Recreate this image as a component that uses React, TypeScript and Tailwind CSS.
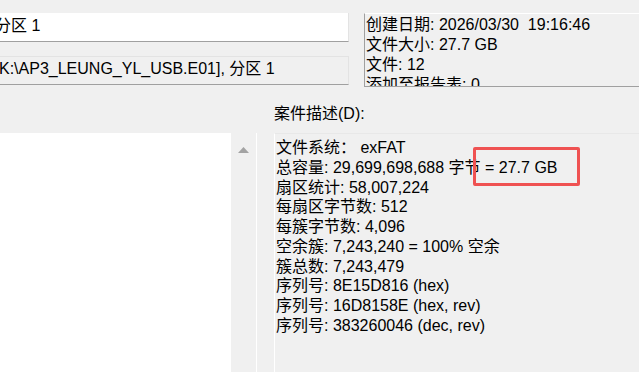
const font = "font-['Liberation_Sans','Noto_Sans_CJK_SC',sans-serif]"

const infoLines = [
  '创建日期: 2026/03/30  19:16:46',
  '文件大小: 27.7 GB',
  '文件: 12',
  '添加至报告表: 0',
]

const descLines = [
  '文件系统： exFAT',
  '总容量: 29,699,698,688 字节 = 27.7 GB',
  '扇区统计: 58,007,224',
  '每扇区字节数: 512',
  '每簇字节数: 4,096',
  '空余簇: 7,243,240 = 100% 空余',
  '簇总数: 7,243,479',
  '序列号: 8E15D816 (hex)',
  '序列号: 16D8158E (hex, rev)',
  '序列号: 383260046 (dec, rev)',
]

export default function App() {
  return (
    <div
      className={`${font} w-[639px] h-[372px] overflow-hidden bg-[#f0f0f0] text-[16px] text-black`}
    >
      {/* Top: partition fields + summary */}
      <div className="flex items-start pt-[13px] h-[87px]">
        <div className="w-[349px] shrink-0 flex flex-col gap-[14px]">
          <div className="h-[29px] bg-white border-b border-r border-b-[#a0a0a0] border-r-[#e3e3e3] pt-[3px] leading-[20px] whitespace-nowrap overflow-hidden">
            <span className="inline-block -ml-[5px]">分区 1</span>
          </div>
          <div className="h-[29px] bg-[#f0f0f0] border-t border-r border-b border-t-[#e3e3e3] border-r-[#e3e3e3] border-b-[#a0a0a0] pt-[2px] leading-[20px] whitespace-nowrap overflow-hidden">
            <span className="inline-block -ml-[1px]">K:\AP3_LEUNG_YL_USB.E01], 分区 1</span>
          </div>
        </div>
        <div className="ml-[15px] w-[300px] shrink-0 h-[74px] overflow-hidden border-l border-t border-b border-l-[#a0a0a0] border-t-white border-b-[#a0a0a0] pl-[1px] pt-[1px] leading-[20px]">
          {infoLines.map((l) => (
            <div key={l} className="whitespace-pre">
              {l}
            </div>
          ))}
        </div>
      </div>

      {/* Bottom: list + description */}
      <div className="flex h-[285px]">
        <div className="w-[231px] shrink-0 mt-[46px] bg-white" />
        <div className="w-[26px] shrink-0 mt-[46px] bg-[#f0f0f0] border-r border-r-white pl-[7px] pt-[14px]">
          <svg width="11" height="6" viewBox="0 0 11 6">
            <polygon points="5.5,0 11,6 0,6" fill="#a3a3a3" />
          </svg>
        </div>
        <div className="ml-[17px] flex-1 flex flex-col">
          <div className="h-[46px] pt-[17px] leading-[20px] whitespace-nowrap">案件描述(D):</div>
          <div className="relative flex-1 border-l border-t border-l-white border-t-[#e8e8e8] pl-[1px] pt-[4px] leading-[19.75px] whitespace-nowrap">
            {descLines.map((l) => (
              <div key={l}>{l}</div>
            ))}
            <div className="absolute left-[198px] top-[13px] w-[107px] h-[39px] border-[3px] border-[#ef5252] rounded-[2px]" />
          </div>
        </div>
      </div>
    </div>
  )
}
